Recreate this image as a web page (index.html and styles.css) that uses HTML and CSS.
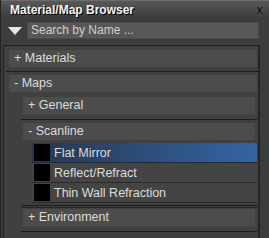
FILE: index.html
```html
<!DOCTYPE html>
<html>
<head>
<meta charset="utf-8">
<link rel="stylesheet" href="styles.css">
</head>
<body>
<div class="win">
  <div class="title">
    <span class="title-text">Material/Map Browser</span>
    <span class="close">x</span>
  </div>
  <div class="search">
    <svg class="tri" width="14" height="9" viewBox="0 0 14 9"><polygon points="0,0 14,0 7,8" fill="#e6e6e6"/></svg>
    <div class="box">Search by Name ...</div>
  </div>
  <div class="list">
    <div class="group">
      <div class="hdr">+ Materials</div>
    </div>
    <div class="group maps">
      <div class="hdr">- Maps</div>
      <div class="sub first">
        <div class="hdr">+ General</div>
      </div>
      <div class="sub">
        <div class="hdr">- Scanline</div>
        <div class="items">
          <div class="item sel"><span class="sw"></span>Flat Mirror</div>
          <div class="item"><span class="sw"></span>Reflect/Refract</div>
          <div class="item"><span class="sw"></span>Thin Wall Refraction</div>
        </div>
      </div>
      <div class="sub last">
        <div class="hdr">+ Environment</div>
      </div>
    </div>
  </div>
</div>
</body>
</html>
```

FILE: styles.css
```css
html, body {
  margin: 0;
  padding: 0;
  width: 269px;
  height: 238px;
  overflow: hidden;
  background: #3c3c3c;
}
.win {
  height: 238px;
  border-left: 1px solid #222;
  box-sizing: border-box;
  font-family: "Liberation Sans", Arial, sans-serif;
  font-size: 12.5px;
  color: #dcdcdc;
}
.title {
  height: 18px;
  box-sizing: border-box;
  border-top: 1px solid #6c6c6c;
  background: linear-gradient(#585858, #3c3c3c);
  display: flex;
  align-items: center;
  justify-content: space-between;
  padding: 0 6px 0 9px;
}
.title-text {
  font-weight: bold;
  font-size: 12px;
  color: #f4f4f4;
  text-shadow: 1px 1px 0 #000;
}
.close {
  font-weight: bold;
  font-size: 12px;
  color: #111;
  text-shadow: 0 0 1px #999;
}
.search {
  height: 27px;
  display: flex;
  align-items: flex-start;
  padding: 4px 10px 0 7px;
  box-sizing: border-box;
  gap: 5px;
  background: #3d3d3d;
}
.tri {
  margin-top: 5px;
}
.box {
  flex: 1;
  height: 17px;
  box-sizing: border-box;
  background: #575757;
  border: 1px solid #4a4a4a;
  padding-left: 3px;
  line-height: 15px;
  font-size: 12px;
  color: #cfcfcf;
}
.list {
  margin: 0 9px 0 2px;
  height: 193px;
  box-sizing: border-box;
  border-top: 1px solid #1e1e1e;
  border-left: 1px solid #262626;
  border-right: 2px solid #262626;
  background: #404040;
  padding: 0 0 0 1px;
}
.group {
  padding: 4px 1px 4px 3px;
  border-bottom: 1px solid #1c1c1c;
  margin-left: 1px;
}
.maps {
  padding-top: 3px;
  border-bottom: none;
}
.hdr {
  height: 17px;
  line-height: 17px;
  background: #4c4c4c;
  padding-left: 5px;
  box-sizing: border-box;
}
.sub {
  margin-left: 12px;
  padding: 3px 2px 2px 2px;
  border-bottom: 1px solid #1c1c1c;
}
.sub.first {
  margin-top: 2px;
  padding-bottom: 5px;
}
.sub.last {
  margin-top: 1px;
  border-top: 1px solid #262626;
  padding-top: 1px;
  padding-bottom: 5px;
}
.items {
  margin: 3px -2px 0 9px;
}
.item {
  height: 20px;
  box-sizing: border-box;
  border-bottom: 1px solid #2a2a2a;
  display: flex;
  align-items: center;
  background: #444;
  padding-left: 2px;
}
.item.sel {
  background: linear-gradient(90deg, #28364c, #3464a4);
  border-bottom-color: #1e2a3a;
}
.sw {
  width: 16px;
  height: 17px;
  background: #000;
  margin-right: 4px;
}
```
